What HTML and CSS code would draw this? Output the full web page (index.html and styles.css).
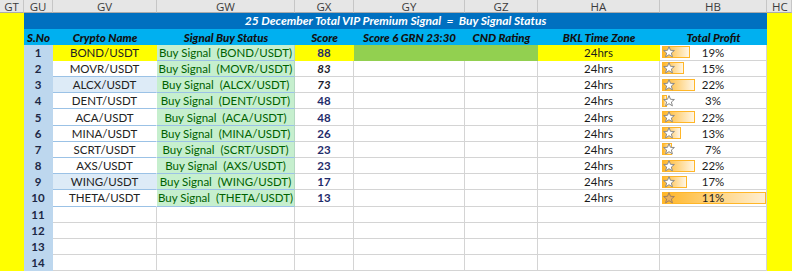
FILE: index.html
```html
<!DOCTYPE html>
<html>
<head>
<meta charset="utf-8">
<link rel="stylesheet" href="styles.css">
</head>
<body>
<div class="sheet">
  <div class="ch">GT</div><div class="ch">GU</div><div class="ch">GV</div><div class="ch">GW</div><div class="ch">GX</div><div class="ch">GY</div><div class="ch">GZ</div><div class="ch">HA</div><div class="ch">HB</div><div class="ch ch-last">HC</div>

  <div class="side side-left"></div>
  <div class="title">25 December Total VIP Premium Signal&nbsp; =&nbsp; Buy Signal Status</div>
  <div class="side side-right"></div>

  <div class="hd">S.No</div><div class="hd">Crypto Name</div><div class="hd">Signal Buy Status</div><div class="hd">Score</div><div class="hd">Score 6 GRN 23:30</div><div class="hd">CND Rating</div><div class="hd">BKL Time Zone</div><div class="hd">Total Profit</div>

  <div class="c sno">1</div><div class="c name yellow">BOND/USDT</div><div class="c sig">Buy Signal&nbsp; (BOND/USDT)</div><div class="c score yellow">88</div><div class="c green"></div><div class="c green"></div><div class="c yellow">24hrs</div><div class="c profit"><span class="bar" style="width:28px"><svg class="star" viewBox="0 0 12 12"><polygon points="6,0.6 7.5,4.3 11.4,4.5 8.4,7 9.4,10.9 6,8.7 2.6,10.9 3.6,7 0.6,4.5 4.5,4.3"/></svg></span><span class="pct">19%</span></div>

  <div class="c sno">2</div><div class="c name">MOVR/USDT</div><div class="c sig">Buy Signal&nbsp; (MOVR/USDT)</div><div class="c score it">83</div><div class="c"></div><div class="c"></div><div class="c">24hrs</div><div class="c profit"><span class="bar" style="width:22px"><svg class="star" viewBox="0 0 12 12"><polygon points="6,0.6 7.5,4.3 11.4,4.5 8.4,7 9.4,10.9 6,8.7 2.6,10.9 3.6,7 0.6,4.5 4.5,4.3"/></svg></span><span class="pct">15%</span></div>

  <div class="c sno">3</div><div class="c name pale">ALCX/USDT</div><div class="c sig">Buy Signal&nbsp; (ALCX/USDT)</div><div class="c score it">73</div><div class="c"></div><div class="c"></div><div class="c">24hrs</div><div class="c profit"><span class="bar" style="width:33px"><svg class="star" viewBox="0 0 12 12"><polygon points="6,0.6 7.5,4.3 11.4,4.5 8.4,7 9.4,10.9 6,8.7 2.6,10.9 3.6,7 0.6,4.5 4.5,4.3"/></svg></span><span class="pct">22%</span></div>

  <div class="c sno">4</div><div class="c name">DENT/USDT</div><div class="c sig">Buy Signal&nbsp; (DENT/USDT)</div><div class="c score">48</div><div class="c"></div><div class="c"></div><div class="c">24hrs</div><div class="c profit"><span class="bar" style="width:5px"><svg class="star" viewBox="0 0 12 12"><polygon points="6,0.6 7.5,4.3 11.4,4.5 8.4,7 9.4,10.9 6,8.7 2.6,10.9 3.6,7 0.6,4.5 4.5,4.3"/></svg></span><span class="pct">3%</span></div>

  <div class="c sno">5</div><div class="c name">ACA/USDT</div><div class="c sig">Buy Signal&nbsp; (ACA/USDT)</div><div class="c score">48</div><div class="c"></div><div class="c"></div><div class="c">24hrs</div><div class="c profit"><span class="bar" style="width:33px"><svg class="star" viewBox="0 0 12 12"><polygon points="6,0.6 7.5,4.3 11.4,4.5 8.4,7 9.4,10.9 6,8.7 2.6,10.9 3.6,7 0.6,4.5 4.5,4.3"/></svg></span><span class="pct">22%</span></div>

  <div class="c sno">6</div><div class="c name">MINA/USDT</div><div class="c sig">Buy Signal&nbsp; (MINA/USDT)</div><div class="c score">26</div><div class="c"></div><div class="c"></div><div class="c">24hrs</div><div class="c profit"><span class="bar" style="width:19px"><svg class="star" viewBox="0 0 12 12"><polygon points="6,0.6 7.5,4.3 11.4,4.5 8.4,7 9.4,10.9 6,8.7 2.6,10.9 3.6,7 0.6,4.5 4.5,4.3"/></svg></span><span class="pct">13%</span></div>

  <div class="c sno">7</div><div class="c name">SCRT/USDT</div><div class="c sig">Buy Signal&nbsp; (SCRT/USDT)</div><div class="c score">23</div><div class="c"></div><div class="c"></div><div class="c">24hrs</div><div class="c profit"><span class="bar" style="width:10px"><svg class="star" viewBox="0 0 12 12"><polygon points="6,0.6 7.5,4.3 11.4,4.5 8.4,7 9.4,10.9 6,8.7 2.6,10.9 3.6,7 0.6,4.5 4.5,4.3"/></svg></span><span class="pct">7%</span></div>

  <div class="c sno">8</div><div class="c name">AXS/USDT</div><div class="c sig">Buy Signal&nbsp; (AXS/USDT)</div><div class="c score">23</div><div class="c"></div><div class="c"></div><div class="c">24hrs</div><div class="c profit"><span class="bar" style="width:33px"><svg class="star" viewBox="0 0 12 12"><polygon points="6,0.6 7.5,4.3 11.4,4.5 8.4,7 9.4,10.9 6,8.7 2.6,10.9 3.6,7 0.6,4.5 4.5,4.3"/></svg></span><span class="pct">22%</span></div>

  <div class="c sno">9</div><div class="c name pale">WING/USDT</div><div class="c sig">Buy Signal&nbsp; (WING/USDT)</div><div class="c score">17</div><div class="c"></div><div class="c"></div><div class="c">24hrs</div><div class="c profit"><span class="bar" style="width:25px"><svg class="star" viewBox="0 0 12 12"><polygon points="6,0.6 7.5,4.3 11.4,4.5 8.4,7 9.4,10.9 6,8.7 2.6,10.9 3.6,7 0.6,4.5 4.5,4.3"/></svg></span><span class="pct">17%</span></div>

  <div class="c sno">10</div><div class="c name">THETA/USDT</div><div class="c sig">Buy Signal&nbsp; (THETA/USDT)</div><div class="c score">13</div><div class="c"></div><div class="c"></div><div class="c">24hrs</div><div class="c profit"><span class="bar full" style="width:104px"><svg class="star gold" viewBox="0 0 12 12"><polygon points="6,0.6 7.5,4.3 11.4,4.5 8.4,7 9.4,10.9 6,8.7 2.6,10.9 3.6,7 0.6,4.5 4.5,4.3"/></svg></span><span class="pct">11%</span></div>

  <div class="c sno">11</div><div class="c"></div><div class="c"></div><div class="c"></div><div class="c"></div><div class="c"></div><div class="c"></div><div class="c"></div>
  <div class="c sno">12</div><div class="c"></div><div class="c"></div><div class="c"></div><div class="c"></div><div class="c"></div><div class="c"></div><div class="c"></div>
  <div class="c sno">13</div><div class="c"></div><div class="c"></div><div class="c"></div><div class="c"></div><div class="c"></div><div class="c"></div><div class="c"></div>
  <div class="c sno">14</div><div class="c"></div><div class="c"></div><div class="c"></div><div class="c"></div><div class="c"></div><div class="c"></div><div class="c"></div>
</div>
</body>
</html>
```

FILE: styles.css
```css
* { box-sizing: border-box; }
html, body { margin: 0; padding: 0; background: #fff; }
body { font-family: Lato, "Liberation Sans", sans-serif; font-size: 11.5px; color: #1b1b1b; }

.sheet {
  display: grid;
  grid-template-columns: 24px 29px 104px 138px 59px 111px 73px 122px 107px 25px;
  grid-template-rows: 13px 15.5px 16.2px repeat(14, 16.2px);
  width: 792px;
  height: 272px;
  overflow: hidden;
}

.ch {
  background: #e6e6e6;
  color: #3c3c3c;
  font-family: "Open Sans", "Liberation Sans", sans-serif;
  font-size: 11.5px;
  display: flex;
  align-items: center;
  justify-content: center;
  border-right: 1px solid #c6c6c6;
  border-bottom: 1px solid #ababab;
  padding-top: 1px;
}
.ch-last { justify-content: flex-start; padding-left: 5px; }

.side { background: #ffff00; grid-row: 2 / 18; }
.side-left { grid-column: 1; }
.side-right { grid-column: 10; }

.title {
  grid-column: 2 / 10;
  grid-row: 2;
  background: #0070c0;
  color: #fff;
  font-size: 12px;
  font-weight: bold;
  font-style: italic;
  display: flex;
  align-items: center;
  justify-content: center;
  white-space: nowrap;
}

.hd {
  background: #00b0f0;
  color: #111;
  font-weight: 900;
  font-style: italic;
  display: flex;
  align-items: center;
  justify-content: center;
  white-space: nowrap;
  padding-top: 1px;
}

.c {
  display: flex;
  align-items: center;
  justify-content: center;
  white-space: nowrap;
  border-right: 1px solid #d4d4d4;
  border-bottom: 1px solid #d4d4d4;
  position: relative;
}

.sno {
  background: #bdd7ee;
  border-color: #bdd7ee;
  font-weight: bold;
  color: #1c2745;
}

.name {
  border-right-color: transparent;
  border-bottom-color: #9bc2e6;
  color: #222;
}
.pale { background: #ddebf7; }

.sig {
  background: #c6efce;
  color: #006100;
  border-right-color: #b4d8c0;
  border-bottom-color: #9bc2e6;
}

.score { font-weight: bold; color: #1f2c6b; }
.it { font-style: italic; color: #1a1a2a; }

.yellow { background: #ffff00; border-color: #ffff00; }
.green { background: #92d050; border-color: #92d050; }

.profit { justify-content: center; }
.bar {
  position: absolute;
  left: 2px;
  top: 1.5px;
  height: 12px;
  border: 1px solid #ffb628;
  background: linear-gradient(to right, #ffb628, #fff6e6);
  display: flex;
  align-items: center;
  overflow: visible;
}
.bar.full { background: linear-gradient(to right, #ffb628, #ffefd2); }
.star {
  position: absolute;
  left: 0;
  top: -1px;
  width: 12px;
  height: 12px;
  fill: #fff;
  stroke: #8a8a8a;
  stroke-width: 1;
  stroke-linejoin: round;
}
.star.gold { fill: #e8b060; stroke: #a08060; }
.pct { position: relative; }
```
